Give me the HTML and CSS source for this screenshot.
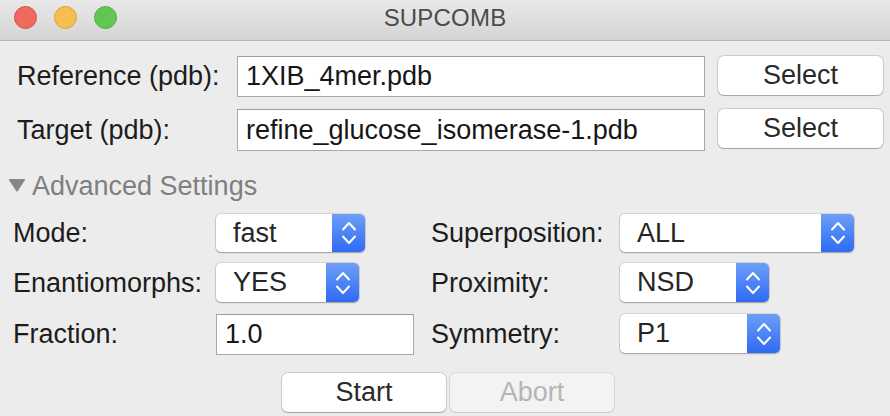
FILE: index.html
```html
<!DOCTYPE html>
<html>
<head>
<meta charset="utf-8">
<title>SUPCOMB</title>
<link rel="stylesheet" href="styles.css">
</head>
<body>
<div class="window">
  <div class="titlebar">
    <div class="lights">
      <span class="light red"></span>
      <span class="light yellow"></span>
      <span class="light green"></span>
    </div>
    <div class="title">SUPCOMB</div>
    <div></div>
  </div>

  <div class="files">
    <label class="lbl">Reference (pdb):</label>
    <div class="field">1XIB_4mer.pdb</div>
    <button class="btn">Select</button>
    <label class="lbl">Target (pdb):</label>
    <div class="field">refine_glucose_isomerase-1.pdb</div>
    <button class="btn">Select</button>
  </div>

  <div class="disclosure">
    <svg class="tri" width="18" height="14" viewBox="0 0 18 14"><path d="M1.5 1 L16.5 1 Q17.5 1 17 2 L9.8 13 Q9 14 8.2 13 L1 2 Q0.5 1 1.5 1 Z" fill="#868686"/></svg>
    <span>Advanced Settings</span>
  </div>

  <div class="settings">
    <span class="slbl">Mode:</span>
    <div class="popup w-mode"><span class="pval">fast</span><span class="stepper"><svg width="16" height="26" viewBox="0 0 16 26"><path d="M2 9.5 L8 3 L14 9.5" /><path d="M2 16.5 L8 23 L14 16.5" /></svg></span></div>
    <span class="slbl">Superposition:</span>
    <div class="popup w-sup"><span class="pval">ALL</span><span class="stepper"><svg width="16" height="26" viewBox="0 0 16 26"><path d="M2 9.5 L8 3 L14 9.5" /><path d="M2 16.5 L8 23 L14 16.5" /></svg></span></div>

    <span class="slbl">Enantiomorphs:</span>
    <div class="popup w-enan"><span class="pval">YES</span><span class="stepper"><svg width="16" height="26" viewBox="0 0 16 26"><path d="M2 9.5 L8 3 L14 9.5" /><path d="M2 16.5 L8 23 L14 16.5" /></svg></span></div>
    <span class="slbl">Proximity:</span>
    <div class="popup w-prox"><span class="pval">NSD</span><span class="stepper"><svg width="16" height="26" viewBox="0 0 16 26"><path d="M2 9.5 L8 3 L14 9.5" /><path d="M2 16.5 L8 23 L14 16.5" /></svg></span></div>

    <span class="slbl">Fraction:</span>
    <div class="field frac">1.0</div>
    <span class="slbl">Symmetry:</span>
    <div class="popup w-sym"><span class="pval">P1</span><span class="stepper"><svg width="16" height="26" viewBox="0 0 16 26"><path d="M2 9.5 L8 3 L14 9.5" /><path d="M2 16.5 L8 23 L14 16.5" /></svg></span></div>
  </div>

  <div class="actions">
    <button class="btn act">Start</button>
    <button class="btn act disabled">Abort</button>
  </div>
</div>
</body>
</html>
```

FILE: styles.css
```css
html, body {
  margin: 0;
  padding: 0;
  width: 890px;
  height: 416px;
  overflow: hidden;
  background: #ececec;
  font-family: "Liberation Sans", Arial, sans-serif;
  color: #1c1c1c;
}

.window {
  width: 890px;
  height: 416px;
  background: #ececec;
}

.titlebar {
  display: grid;
  grid-template-columns: 1fr auto 1fr;
  align-items: center;
  background: linear-gradient(#e9e9e9, #d4d4d4);
  border-bottom: 1px solid #b4b4b4;
  box-sizing: border-box;
  height: 41px;
  letter-spacing: 0.2px;
}

.lights {
  display: flex;
  gap: 17px;
  padding-left: 14px;
  margin-top: -6px;
}

.light {
  width: 23px;
  height: 23px;
  border-radius: 50%;
  box-sizing: border-box;
}
.red { background: #ee6a5f; border: 1px solid #d65347; }
.yellow { background: #f5bf4f; border: 1px solid #d9a340; }
.green { background: #62c655; border: 1px solid #55ad45; }

.title {
  font-size: 24px;
  color: #4b4b4b;
  margin-top: -4px;
}

.files {
  display: grid;
  grid-template-columns: 207px 468px 165px;
  grid-template-rows: 41px 42px;
  column-gap: 13px;
  row-gap: 12px;
  padding-left: 17px;
  margin-top: 15px;
  font-size: 27px;
}

.lbl {
  align-self: center;
  color: #1c1c1c;
}

.field {
  background: #fff;
  border: 1px solid #a8a8a8;
  border-top-color: #9c9c9c;
  box-sizing: border-box;
  padding-left: 8px;
  display: flex;
  align-items: center;
  font-size: 27px;
  color: #161616;
}

.btn {
  font-family: inherit;
  font-size: 27px;
  color: #2a2a2a;
  background: #fff;
  border: none;
  border-radius: 6px;
  box-shadow: 0 0 0 1px rgba(0,0,0,0.13), 0 1px 1px rgba(0,0,0,0.2);
  height: 39px;
  padding: 0;
  align-self: start;
}

.disclosure {
  display: flex;
  align-items: center;
  gap: 6px;
  padding-left: 8px;
  margin-top: 20px;
  height: 30px;
  font-size: 27px;
  color: #7f7f7f;
}

.tri { margin-top: -2px; }

.settings {
  display: grid;
  grid-template-columns: 203px 215px 189px auto;
  grid-template-rows: 39px 41px 41px;
  row-gap: 10px;
  padding-left: 13px;
  margin-top: 13px;
  font-size: 27px;
}

.slbl {
  align-self: center;
  color: #1c1c1c;
}

.popup {
  justify-self: start;
  align-self: start;
  height: 38px;
  display: flex;
  background: #fff;
  border-radius: 5px;
  box-shadow: 0 0 0 1px rgba(0,0,0,0.1), 0 1px 1.5px rgba(0,0,0,0.25);
  overflow: hidden;
}

.pval {
  flex: 1;
  display: flex;
  align-items: center;
  padding-left: 17px;
  color: #262626;
}

.stepper {
  width: 33px;
  display: flex;
  align-items: center;
  justify-content: center;
  background: linear-gradient(#6d9ff7, #2f6af5);
}

.stepper path {
  fill: none;
  stroke: #fff;
  stroke-width: 2;
  stroke-linecap: round;
  stroke-linejoin: round;
}

.w-mode { width: 149px; }
.w-enan { width: 143px; height: 39px; }
.w-sup { width: 234px; }
.w-prox { width: 149px; height: 39px; }
.w-sym { width: 160px; height: 39px; }

.frac {
  width: 198px;
  height: 41px;
  justify-self: start;
}

.actions {
  display: flex;
  justify-content: center;
  gap: 4px;
  padding-left: 6px;
  margin-top: 18px;
}

.act {
  width: 164px;
  height: 39px;
}

.disabled {
  background: #f3f3f3;
  color: #b5b5b5;
  box-shadow: 0 0 0 1px rgba(0,0,0,0.08), 0 1px 1px rgba(0,0,0,0.06);
}
```
